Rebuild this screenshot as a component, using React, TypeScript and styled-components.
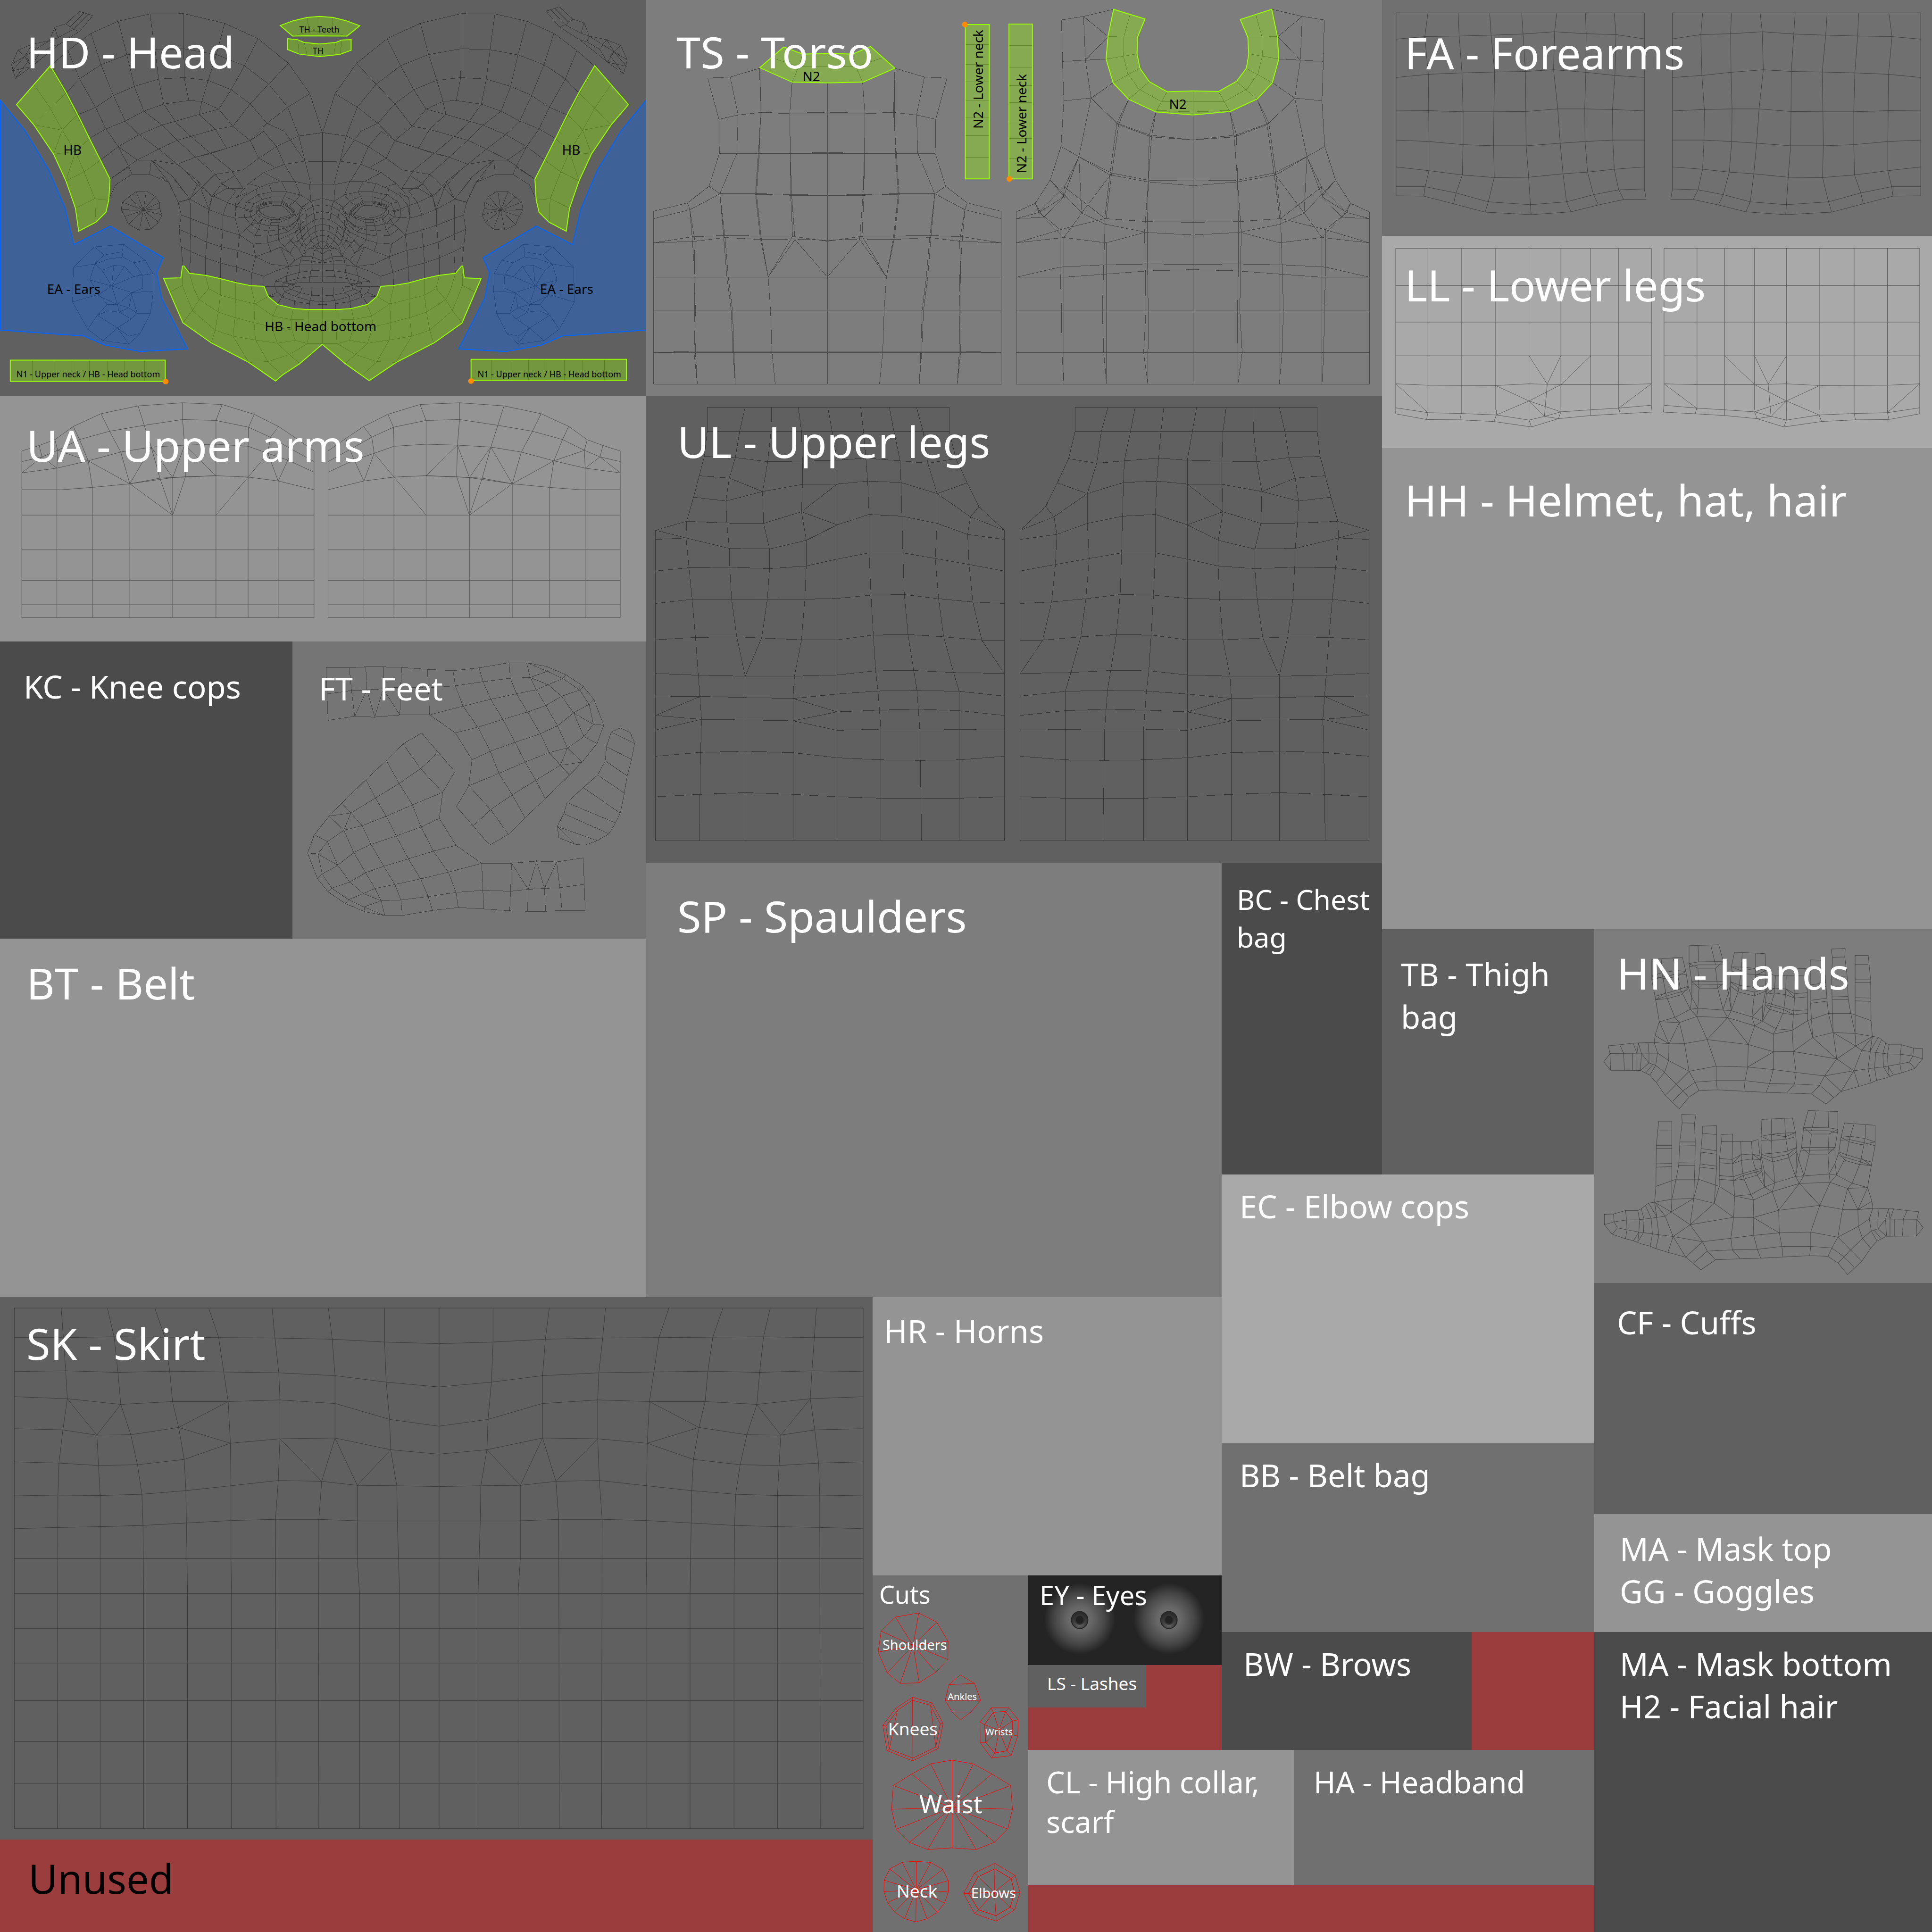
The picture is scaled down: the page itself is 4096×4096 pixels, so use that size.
import React from "react";
import styled, { createGlobalStyle } from "styled-components";

const GlobalStyle = createGlobalStyle`
  *, *::before, *::after { box-sizing: border-box; }
  body { margin: 0; background: #9c3d3d; font-family: "Noto Sans", "Open Sans", sans-serif; }
`;

/* ---------- layout ---------- */

const tracks = (...sizes: number[]) => sizes.map((s) => `minmax(0, ${s}fr)`).join(" ");

const Atlas = styled.main`
  display: grid;
  width: 100%;
  aspect-ratio: 1;
  grid-template-columns: ${tracks(1370, 480, 330, 410, 340, 450, 716)};
  grid-template-rows: ${tracks(1830, 140, 520, 260, 590, 370, 386)};
  grid-template-areas:
    "left torso torso torso torso right right"
    "left spaul spaul spaul chest right right"
    "left spaul spaul spaul chest thigh hands"
    "left spaul spaul spaul elbow elbow hands"
    "skirt skirt horns horns elbow elbow hands"
    "skirt skirt cuts eyes elbow elbow hands"
    "skirt skirt cuts foot foot foot hands";
`;

const Stack = styled.div<{ $area?: string; $rows: number[] }>`
  display: grid;
  min-width: 0;
  grid-area: ${(p) => p.$area ?? "auto"};
  grid-template-rows: ${(p) => tracks(...p.$rows)};
`;

const Row = styled.div<{ $cols: number[] }>`
  display: grid;
  min-height: 0;
  grid-template-columns: ${(p) => tracks(...p.$cols)};
`;

const tones = {
  coal: "#4b4b4b",
  dark: "#606060",
  slate: "#707070",
  stone: "#757575",
  mid: "#7d7d7d",
  light: "#949494",
  pale: "#a9a9a9",
  night: "#242424",
  unused: "#9c3d3d",
};

const Panel = styled.section<{ $tone: keyof typeof tones; $area?: string }>`
  position: relative;
  overflow: hidden;
  min-width: 0;
  min-height: 0;
  grid-area: ${(p) => p.$area ?? "auto"};
  background: ${(p) => tones[p.$tone]};
`;

const sizes = {
  xl: [92, 120],
  lg: [85, 108],
  md: [67, 90],
  sm: [63, 84],
  xs: [59, 80],
  eye: [56, 74],
  cut: [52, 68],
  tiny: [37, 50],
} as const;

const Title = styled.h2<{ $size?: keyof typeof sizes; $top: number; $left: number; $ink?: string }>`
  position: relative;
  margin: 0;
  padding: ${(p) => p.$top}px 0 0 ${(p) => p.$left}px;
  font-weight: 400;
  font-size: ${(p) => sizes[p.$size ?? "xl"][0]}px;
  line-height: ${(p) => sizes[p.$size ?? "xl"][1]}px;
  color: ${(p) => p.$ink ?? "#fff"};
  white-space: nowrap;
`;

/* ---------- drawings ---------- */

const Drawing = styled.svg`
  position: absolute;
  inset: 0;
  display: block;
  width: 100%;
  height: 100%;
  path, polygon, rect { vector-effect: non-scaling-stroke; }
`;

const Wire = styled.g<{ $ink: string }>`
  fill: none;
  stroke: ${(p) => p.$ink};
  stroke-width: 1;
  shape-rendering: crispEdges;
`;

const Zone = styled.g<{ $ink: string }>`
  fill: ${(p) => p.$ink};
  fill-opacity: 0.35;
  stroke: ${(p) => p.$ink};
  stroke-width: 2;
`;

const Note = styled.span<{ $x: number; $y: number; $size: number; $ink: string; $upright?: boolean }>`
  position: absolute;
  left: ${(p) => p.$x * 100}%;
  top: ${(p) => p.$y * 100}%;
  font-size: ${(p) => p.$size}px;
  line-height: 1;
  white-space: nowrap;
  color: ${(p) => p.$ink};
  writing-mode: ${(p) => (p.$upright ? "vertical-rl" : "horizontal-tb")};
  transform: translate(-50%, -50%) ${(p) => (p.$upright ? "rotate(180deg)" : "")};
`;

type Mark = [text: string, x: number, y: number, size: number, upright?: boolean];

function Notes({ box, marks, ink }: { box: number[]; marks: Mark[]; ink: string }) {
  return (
    <>
      {marks.map(([text, x, y, size, upright]) => (
        <Note
          key={text + x}
          $x={(x - box[0]) / box[2]}
          $y={(y - box[1]) / box[3]}
          $size={size}
          $ink={ink}
          $upright={upright}
        >
          {text}
        </Note>
      ))}
    </>
  );
}

/** A mesh island together with its mirror image; `sum` is twice the axis x. */
function Mirrored({ d, sum }: { d: string; sum: number }) {
  return (
    <>
      <path d={d} />
      <path d={d} transform={`translate(${sum} 0) scale(-1 1)`} />
    </>
  );
}

/** Closed rim with a spoke from every rim point to the centre. */
function fan(cx: number, cy: number, rim: string) {
  const pts = rim.split(" ");
  return `M${rim}Z` + pts.map((p) => `M${p} ${cx},${cy}`).join("");
}

/** Two nested rims joined point by point. */
function band(outer: string, inner: string) {
  const o = outer.split(" ");
  const i = inner.split(" ");
  return `M${outer}Z M${inner}Z` + o.map((p, n) => `M${p} ${i[n]}`).join("");
}

const lines = (xs: number[], y1: number, y2: number) => xs.map((x) => `M${x},${y1} ${x},${y2}`).join("");
const rungs = (ys: number[], x1: number, x2: number) => ys.map((y) => `M${x1},${y} ${x2},${y}`).join("");

/** Horizontal rows and vertical columns through a grid of mesh points. */
function mesh(columns: number[][][]) {
  const cols = columns.map((c) => "M" + c.map((p) => p.join(",")).join(" ")).join("");
  const rows = columns[0].map((_, r) => "M" + columns.map((c) => c[r].join(",")).join(" ")).join("");
  return cols + rows;
}

const skull =
  "M782,525 752,371 700,251 626,153 545,92 446,54 364,55 287,84 221,132 165,200 122,262" +
  "M782,525 725,538 698,424 652,333 593,260 525,216 446,193 376,197 308,217 245,256 193,312 159,370 122,428 82,494" +
  "M740,638 725,538M740,638 690,520 648,488 607,411 561,355 505,318 447,307 385,313 326,342 275,378 232,425 186,456 151,515 130,610" +
  "M648,488 607,556 565,500 531,432 490,401 458,398 397,412 349,440 304,479 257,510 217,548 183,600 160,716" +
  "M490,401 483,453 393,495 338,533 287,580 243,635 204,680 160,716" +
  "M483,453 523,512 430,555 385,590 333,633 267,709" +
  "M523,512 550,587 475,622 430,650 367,633 363,690" +
  "M446,54 446,193 447,307 458,398M364,55 376,197 385,313 397,412 430,490 470,550 512,608 560,672 590,745" +
  "M287,84 308,217 326,342 349,440 393,495 430,555 475,622 522,690 550,745" +
  "M221,132 245,256 275,378 304,479 338,533 385,590 430,650 480,716 515,780" +
  "M165,200 193,312 232,425 257,510 287,580 333,633 367,633" +
  "M287,580 313,660 320,690 363,690 410,722 432,800M313,660 267,709M320,690 280,732 264,790M410,722 367,633 420,700 461,788 432,800" +
  "M122,262 159,370 186,456 217,548 243,635 267,709" +
  "M545,92 525,216 505,318 490,401M626,153 593,260 561,355 531,432 483,453M700,251 652,333 607,411 565,500 523,512" +
  "M752,371 698,424 648,488M607,556 550,587 512,608 475,622M82,334 122,428 151,515 183,600 204,680 230,786 233,879" +
  "M82,494 151,515M130,610 183,600M183,824 230,786 264,793" +
  "M782,525 782,718M782,525 838,538M725,538 671,580 628,626 590,672 522,690 461,788" +
  "M671,580 640,520 607,556 628,626 665,660M690,650 671,580M782,640 740,638 690,650 640,683 603,727 573,783 570,862" +
  "M740,638 755,731M690,650 715,718M640,683 680,718M603,727 628,738M573,783 598,762M480,716 505,820M550,745 515,780 505,850M590,745 550,745";

const face =
  "M40,20 85,147 99,228 89,318 99,430 107,550M141,127 142,318 145,460 138,597M85,147 141,127 175,33 M141,127 65,0" +
  "M175,33 120,-50M175,33 248,105 227,190 227,293 220,400 214,500 214,610M141,127 227,190 297,228 355,247 397,244 430,238" +
  "M248,105 318,148 297,228 297,323 290,430 285,533 285,632M290,30 360,75 318,148 362,170 398,188 443,202M248,105 290,30 350,-20" +
  "M99,228 142,248 227,293 297,323 376,354 407,315 430,288 452,245M89,318 142,350 220,400 290,430 375,455 452,493 525,458 570,430" +
  "M99,430 145,460 214,500 285,533 365,560 430,590 492,617 545,585 611,555 640,515 675,490" +
  "M355,247 376,354 368,450 362,560 358,655M376,354 440,412 452,493 435,590 430,678M452,493 525,540 611,555M492,617 492,680" +
  "M355,247 362,170 400,105 455,62 515,28 575,14 640,14 708,33 769,33" +
  "M472,190 500,175 540,166 575,168 595,185 608,208 622,222 600,235 563,247 530,245 495,230 472,208Z" +
  "M465,182 497,162 533,152 573,152 605,175 625,205 632,222 612,240 565,258 530,258 488,242 462,212Z" +
  "M459,178 495,156 530,146 577,146 608,170 630,200 637,222 622,242 565,275 525,273 482,256 455,215Z" +
  "M452,174 495,150 528,139 578,139 612,166 636,198 641,225 640,250" +
  "M425,205 445,155 485,128 530,112 595,112 640,140 675,185 650,260 610,300 563,297 515,297 465,280 430,240Z" +
  "M397,195 410,145 460,100 530,80 600,80 665,100 715,140 M397,195 400,245 430,288 465,320 515,328 560,322 620,300 660,245" +
  "M407,315 450,358 510,362 560,350 605,335 640,300M440,412 510,405 560,385 600,362 640,335 695,290" +
  "M530,80 530,139M600,80 578,139 575,168M665,100 640,140 608,170M530,166 530,112M460,100 485,128 497,175M410,145 445,155 472,190M397,195 425,205 472,200M400,245 430,240 462,212M465,280 488,242M430,288 465,280M465,320 482,256M515,328 530,245M560,322 565,247M610,300 612,240M515,28 530,80M575,14 600,80M640,14 665,100M455,62 460,100" +
  "M450,358 465,320M510,405 510,362 515,328M560,385 560,322M605,335 580,300M510,405 525,458M560,385 590,430 615,470 640,515M600,362 630,405 660,450 675,490" +
  "M769,122 715,140 678,170 660,205 640,250M769,162 725,172 690,200 660,245 640,300M769,206 730,215 695,242 665,290 640,335" +
  "M769,250 733,258 695,290 665,335 630,375 590,430M769,287 735,295 700,328 670,372 640,415 615,470 570,430" +
  "M769,325 738,332 706,360 680,395 660,450M769,357 740,365 715,390 692,425 675,490 720,492 769,520" +
  "M769,395 755,400 730,425 700,445 675,490M769,420 752,420 740,435 700,445M769,445 745,438 730,455 M769,475 740,450 730,455 725,490 718,520 716,545" +
  "M708,33 715,140 725,172 730,215 733,258 735,295 740,365 752,400 752,420 769,445M678,170 690,200 695,242 695,290 700,328 715,390 740,435" +
  "M660,205 665,290 670,372 692,425M640,335 655,390 680,430M655,390 630,405M650,260 665,335 680,395" +
  "M660,450 675,490 665,515 662,545M665,515 718,520 769,533M611,555 570,430M0,-20 40,20" +
  "M769,545 716,543 662,545 611,555M769,578 715,582 660,592 600,615 545,648 543,682 555,720 590,750" +
  "M769,617 710,620 650,632 585,655 580,682 590,715 640,745 710,772 769,778M769,655 710,655 660,657 612,668 640,682 700,687 769,687" +
  "M769,742 718,738 665,722 620,700 605,682 612,668M769,797 708,792 645,780 580,750 512,745M492,681 605,682" +
  "M716,545 715,582 710,620 710,655M662,545 660,592 650,632 640,660M600,615 600,655M611,555 600,615M545,648 585,655 635,668M590,662 638,672M716,687 718,738 710,772 706,828M675,683 665,722 640,745 635,820M640,682 620,700 590,715 557,797M555,720 512,745" +
  "M105,600 105,675 45,717M105,675 123,740 152,835 107,913M138,600 160,700 184,765 275,845 355,880 445,912 530,940 625,958 769,960" +
  "M214,612 230,695 285,738 365,765 450,793 535,870 620,892 769,897M230,695 184,765 152,835 260,960 345,998 450,1022 555,1043 640,1025 700,1045 769,1045" +
  "M285,632 285,738 275,845 260,960 242,1040M358,655 355,880 345,998 420,1165M430,678 450,793 445,912 452,1022 510,1160 575,1240M512,745 450,793" +
  "M557,797 535,870 530,940 555,1043 612,1115 660,1170M632,822 620,892 625,958 640,1025M706,828 704,897 704,960 700,1045 612,1115 510,1160 420,1165";

const ear =
  "M300,967 352,1030 371,1083 372,1155 365,1240 340,1320 313,1362 250,1348 213,1303 176,1195 178,1058 229,977Z" +
  "M229,977 253,1009 296,997 300,967 M178,1058 230,1045 253,1009 M230,1045 264,1025 298,1017 325,1040 352,1030M230,1045 218,1108 271,1132 320,1158 372,1152" +
  "M296,997 298,1017M230,1045 248,1070 276,1050 302,1054 324,1095 345,1085 347,1140 320,1158M325,1040 345,1085M248,1070 271,1132 276,1050M302,1054 271,1132 240,1165 176,1195M324,1095 271,1132 285,1205 313,1218 320,1158 285,1205 238,1170" +
  "M240,1165 260,1205 236,1248 213,1303M260,1205 285,1205 289,1235 313,1218 333,1240 365,1240M333,1240 318,1262 289,1235 262,1230 236,1248 285,1298 250,1348M318,1262 285,1298 313,1330 340,1320M313,1330 313,1362M285,1298 313,1362M333,1240 320,1170M218,1108 240,1165M371,1083 324,1095";

const scrap =
  "M1325,44 1357,27 1390,76 1417,90 1430,143 1472,157 1506,180 1522,237 1513,292 1474,246 1407,158 1357,106 1325,44" +
  "M1336,39 1372,98 1390,76M1346,33 1380,88M1357,106 1372,98 1410,132 1430,143 1424,165 1407,158M1410,132 1417,90M1430,143 1490,205 1522,237M1472,157 1455,195 1424,165M1472,157 1490,205 1506,180M1455,195 1474,246 1490,205 1520,262 1474,246M1490,205 1480,220 1513,292";

const chin =
  "15,630 97,627 105,552 112,552 138,598 218,612 285,632 360,658 430,677 492,681 512,745 557,797 632,822 690,828 850,828 908,822 985,796 1028,746 1047,681 1108,676 1180,659 1252,632 1320,612 1402,598 1430,552 1436,552 1443,627 1523,632 1432,915 1300,1041 1120,1165 992,1281 880,1175 769,1050 660,1175 580,1245 547,1283 420,1165 242,1041 107,913";

const temple =
  "M122,260 40,414 82,494 130,610 160,716 183,824 191,915 233,879 257,840 264,791 267,709 217,548 190,458 159,362Z";

const cheek =
  "M0,396 62,520 118,672 158,824 179,968 267,895 396,1020 380,1079 392,1180 455,1381 340,1391 255,1366 204,1330 0,1306Z";

const teeth =
  "M745,69 750,125 710,143M776,65 776,125M808,69 804,125 842,143M750,125 804,125M722,157 726,214M738,168 745,218M776,174 776,224M815,168 810,219M830,158 825,215";

function HeadDrawing() {
  return (
    <Drawing viewBox="0 0 1370 840" preserveAspectRatio="none" aria-hidden="true">
      <g transform="scale(.87372 .535714)">
        <Wire $ink="#393939">
          <Mirrored d={skull} sum={1565} />
          <Mirrored d={ear} sum={1570} />
          <Mirrored
            d={fan(348, 832, "330,758 355,756 377,777 387,802 388,826 393,850 385,880 366,907 338,911 312,888 303,857 294,830 297,800 312,780")}
            sum={1563}
          />
          <path d={scrap} />
          <path d={scrap} transform="translate(1550 18) scale(-1 1)" />
          <path d={teeth + lines([78, 131, 175, 217, 261, 303, 351, 1192, 1242, 1283, 1327, 1370, 1414, 1467], 1425, 1508)} />
        </Wire>
      </g>
      <g transform="translate(340 380) scale(.446429 .333333)">
        <Wire $ink="#393939">
          <Mirrored d={face} sum={1539} />
          <path d="M769,0 769,655M769,687 769,1050" />
        </Wire>
        <Zone $ink="#99ff00">
          <polygon points={chin} />
        </Zone>
      </g>
      <g transform="scale(.87372 .535714)">
        <Zone $ink="#0066ff">
          <Mirrored d={cheek} sum={1568} />
        </Zone>
        <Zone $ink="#99ff00">
          <Mirrored d={temple} sum={1565} />
          <path d="M680,101 710,83 745,69 776,65 808,69 840,82 873,102 842,143 740,142 710,143Z" />
          <path d="M698,153 722,157 738,168 776,174 815,168 830,158 852,157 852,199 825,215 776,224 726,214 698,196Z" />
          <rect x="25" y="1425" width="376" height="84" />
          <rect x="1143" y="1422" width="377" height="83" />
        </Zone>
        <ellipse cx="402" cy="1510" rx="7" ry="11" fill="#ff8c00" />
        <ellipse cx="1143" cy="1508" rx="7" ry="11" fill="#ff8c00" />
      </g>
    </Drawing>
  );
}

const headMarks: Mark[] = [
  ["TH - Teeth", 775, 115, 18],
  ["TH", 772, 199, 18],
  ["HB", 176, 592, 28],
  ["HB", 1386, 592, 28],
  ["EA - Ears", 179, 1143, 28],
  ["EA - Ears", 1375, 1143, 28],
  ["HB - Head bottom", 778, 1290, 28],
  ["N1 - Upper neck / HB - Head bottom", 214, 1481, 18],
  ["N1 - Upper neck / HB - Head bottom", 1333, 1481, 18],
];

const torsoBack =
  "M242,270 179,305 131,309 155,472 156,607 134,737 88,803 16,836 16,1521M179,305 196,455 193,607 157,767 93,830 16,865M134,737 157,767M88,803 93,830" +
  "M242,270 245,445 239,607 233,768 243,940 260,1096 265,1230 268,1395 275,1521M242,270 243,445 241,607 235,768 245,940 260,1096" +
  "M311,325 306,448 307,607 310,772 317,948 386,1096M307,607 308,772 312,935 260,1096 317,948M386,328 386,1521" +
  "M157,767 168,940 175,1097 184,1228 187,1395 190,1521M157,767 165,935 172,1097 181,1228 185,1395 190,1521" +
  "M93,830 104,955 102,1097 105,1228 102,1395 109,1521M93,830 98,940 104,1097 103,1228 105,1395 109,1521" +
  "M155,472 196,455 245,445 306,450 386,451M245,445 306,448 386,444M156,607 386,607M239,605 350,605 386,603M157,767 233,769 308,773 386,773M157,767 233,766 308,770 386,772" +
  "M16,961 98,937 168,932 243,934 312,935 386,955M16,961 104,955 168,940 243,948 317,946 386,951M16,1395 102,1390 386,1390" +
  "M268,229 325,264 386,263M334,214 325,264 311,325" +
  rungs([1097, 1228, 1395, 1520], 16, 386);

const torsoFront =
  "M996,37 932,65 885,79 887,243 890,399 884,580 861,712 829,805 789,838 789,1521M932,65 936,238 948,388 922,620 891,740 837,841 789,865M932,65 984,145 936,238" +
  "M887,243 936,238 980,234M890,399 948,388 995,328M948,388 1005,492 1077,542 1165,554M948,388 1003,487 1072,534 1165,554" +
  "M1028,393 1003,487 988,692 977,865M1028,393 1007,492 992,685 980,865M1086,443 1072,534 1070,715 1068,877 1068,1045 1070,1228 1069,1521M1086,443 1077,542 1070,715 1062,918 1065,1228 1060,1395 1069,1521" +
  "M884,580 922,620 992,685 1070,713 1165,716M922,620 988,692 1070,720 1165,735M978,865 1068,877 1165,880M978,865 884,908 789,961" +
  "M980,888 1068,920 1165,930M922,620 889,780M861,712 928,843 980,888M891,740 978,865M861,712 891,780 847,860 789,865M891,740 889,780 837,841M829,805 847,860 890,940M829,805 837,841 882,908" +
  "M789,961 890,940 980,961 1062,920M992,685 928,843 890,940M922,620 928,843M882,908 882,1057 885,1228 886,1395 890,1521M890,940 890,1521" +
  "M978,865 975,1047 972,1228 975,1395 981,1521M980,961 980,1521M789,1097 882,1057 977,1048 1068,1045 1165,1046M789,1097 890,1097 979,1085 1070,1072 1165,1067M1165,362 1165,1521" +
  "M1031,57 1018,145 1017,222 1026,290 1050,353 1098,402 1165,402M984,145 1047,147M980,234 1046,213M995,328 1052,270M1028,393 1072,323M1086,443 1110,363M1086,437 1165,443" +
  rungs([1228, 1395, 1520], 789, 1165);

function TorsoDrawing() {
  return (
    <Drawing viewBox="0 0 1568 1568" preserveAspectRatio="none" aria-hidden="true">
      <Wire $ink="#464646">
        <Mirrored d={torsoBack} sum={772} />
        <Mirrored d={torsoFront} sum={2330} />
        <path d={rungs([176, 255, 324, 397, 464, 537, 622], 680, 731) + rungs([180, 266, 339, 406, 479, 548, 628], 773, 823)} />
      </Wire>
      <Zone $ink="#99ff00">
        <path d="M293,186 334,214 386,211 440,214 478,184 530,270 462,325 386,328 311,325 242,268Z" />
        <path d="M996,37 1063,75 1047,147 1046,213 1052,270 1072,323 1110,363 1165,360 1220,362 1258,322 1279,270 1284,213 1282,147 1266,77 1333,37 1345,145 1348,234 1334,328 1302,392 1245,441 1165,455 1086,443 1028,393 995,328 980,234 984,145Z" />
        <rect x="680" y="97" width="51" height="611" />
        <rect x="773" y="95" width="50" height="613" />
      </Zone>
      <ellipse cx="679" cy="97" rx="6" ry="11" fill="#ff8c00" />
      <ellipse cx="774" cy="708" rx="6" ry="11" fill="#ff8c00" />
    </Drawing>
  );
}

const torsoMarks: Mark[] = [
  ["N2", 352, 300, 28],
  ["N2", 1133, 410, 28],
  ["N2 - Lower neck", 707, 314, 28, true],
  ["N2 - Lower neck", 799, 489, 28, true],
];

const forearm = mesh([
  [[40, 45], [40, 137], [40, 271], [40, 388], [40, 490], [40, 584], [40, 653], [40, 685]],
  [[131, 45], [122, 128], [132, 260], [133, 387], [134, 495], [134, 597], [123, 653], [119, 686]],
  [[217, 45], [220, 126], [228, 255], [231, 391], [231, 506], [229, 612], [211, 675], [204, 713]],
  [[307, 45], [311, 123], [321, 252], [319, 391], [318, 510], [320, 621], [303, 706], [294, 742]],
  [[398, 45], [402, 119], [409, 250], [410, 390], [411, 510], [418, 620], [423, 716], [425, 751]],
  [[498, 45], [492, 111], [489, 244], [501, 381], [508, 501], [516, 608], [526, 706], [539, 741]],
  [[580, 45], [582, 118], [581, 253], [578, 381], [579, 495], [586, 602], [603, 681], [617, 717]],
  [[662, 45], [667, 121], [664, 264], [657, 383], [658, 490], [662, 592], [675, 664], [689, 698]],
  [[748, 45], [748, 136], [748, 271], [748, 388], [748, 490], [748, 584], [748, 661], [753, 697]],
]);

const lowerLeg =
  lines([39, 768], 869, 1418) +
  lines([131, 226, 324, 419, 510, 595, 674], 869, 1434) +
  rungs([869, 999, 1127, 1245], 39, 768) +
  "M39,1343 131,1348 324,1349 419,1343 510,1346 674,1346 768,1343M39,1427 131,1444 226,1447 326,1452 419,1470 463,1457 510,1441 595,1434 675,1428 768,1418" +
  "M39,1418 39,1448 127,1468 222,1469 319,1475 426,1494 503,1465 595,1454 679,1448 770,1442 768,1418M131,1434 131,1444 127,1468M226,1434 226,1447 222,1469M326,1434 326,1452 319,1475M419,1434 419,1470 426,1494M510,1441 503,1465 463,1457M595,1434 595,1454M675,1428 679,1448" +
  "M419,1245 471,1344 510,1245M595,1245 510,1346 419,1403 324,1349M471,1344 463,1457 419,1403 326,1452M419,1403 510,1441M39,1343 131,1444M768,1343 675,1428";

const upperArm =
  "M53,350 95,315 133,278 178,193 245,112 335,62 443,42 539,53 617,116 676,194 719,270 762,350" +
  "M53,418 102,388 140,346 193,277 266,224 350,186 443,149 524,155 603,198 656,262 705,335 762,418" +
  "M53,490 138,460 214,413 293,357 367,325 448,313 524,307 602,320 650,365 700,410 762,486" +
  "M53,598 150,598 224,583 315,560 420,520 524,508 602,517 675,542 762,598M315,560 388,524 450,515 524,508" +
  "M95,315 102,388 53,490M102,388 138,460M133,278 140,346 138,460 138,1415M178,193 193,277 214,413 224,583 224,1415M245,112 266,224 293,357 315,560 315,1415M140,346 214,413 315,560 419,760" +
  "M335,62 350,186 367,325 315,560M367,325 419,520 419,1415M367,325 388,524 419,760M443,42 443,149 448,313 419,520M448,313 450,515 419,760M448,313 524,508" +
  "M539,53 524,155 524,1415M617,116 603,198 602,320 602,1415M676,194 656,262 650,365 675,542 675,1415M650,365 602,517 524,760M719,270 700,400 675,542M53,350 53,1415M762,350 762,1415" +
  rungs([760, 982, 1177, 1333, 1415], 53, 762);

const upperLeg =
  "M130,37 646,37M130,118 646,118M130,37 130,118 124,202 113,267 101,339 86,420 20,450 20,1493 763,1493 763,450 709,371 684,291 660,210 646,118 646,37" +
  "M124,202 190,206 259,220 333,218 407,215 468,208 541,217 600,225 660,210M113,267 177,275 248,320 333,296 407,295 472,285 543,290 620,327 684,291M101,339 170,352 248,320" +
  "M620,327 691,405 763,450M709,371 691,405 685,464 688,565M86,420 172,426 250,427 331,388 407,295M331,388 407,432 475,397 545,403 620,427 685,464 763,481" +
  "M20,481 85,476 177,511 263,513 341,484 407,432M20,450 85,476M20,587 91,576 178,574 263,579 341,570 407,547 475,526 547,526 616,545 688,565 763,587" +
  "M20,696 98,682 182,682 258,683 338,682 407,679 479,668 550,666 623,680 696,691 763,696M20,818 105,810 193,808 246,812 331,818 407,818 484,802 558,800 634,808 715,819 763,819" +
  "M20,931 111,937 211,940 316,940 407,936 489,922 570,921 655,928 763,931M20,1007 115,1008 211,1012 313,1015 407,1000 494,990 577,988 667,991 763,1007" +
  "M115,1008 20,1072 118,1085 20,1121M118,1085 211,1087 313,1090 407,1060 313,1015M407,1060 498,1054 580,1051 667,1056 763,1072M313,1090 407,1122 500,1118 583,1117 667,1119 763,1121" +
  "M20,1209 116,1196 211,1192 313,1197 407,1214 500,1221 584,1223 667,1221 763,1209M20,1345 115,1337 211,1331 313,1337 407,1345 500,1350 667,1350 763,1345" +
  "M211,37 199,118 190,206 177,275 170,352 172,426 177,511 178,574 182,682 193,808 211,940 211,1493M86,420 85,476 91,576 98,682 105,810 111,937 118,1085 116,1196 113,1493" +
  "M267,37 266,118 259,220 248,320 250,427 263,513 263,579 258,683 246,812 211,940M324,37 331,118 333,218 333,296 331,388 341,484 341,570 338,682 331,818 316,940 313,1015 313,1493" +
  "M387,37 396,118 407,215 407,1493M457,37 463,118 468,208 472,285 475,397 475,526 479,668 484,802 489,922 494,990 500,1118 500,1493" +
  "M518,37 528,118 541,217 543,290 545,403 547,526 550,666 558,800 570,921 577,988 583,1117 584,1223 587,1493M576,37 590,118 600,225 620,327 620,427 616,545 623,680 634,808 655,928 667,991 667,1493M688,565 696,691 715,819 763,931";

const foot =
  "M149,139 252,139 325,134 405,134 484,137 598,147 712,154 827,139 960,112 1038,112 1126,132 1212,175 1290,238 1336,306 1380,442 1350,538 1284,637 1228,705 1121,829 1031,930 957,1018 874,1075 801,973 727,872 781,762 796,624 722,482 608,387 476,388 365,399 276,395 158,416Z" +
  "M152,277 262,259 330,255 402,250 480,240 603,245 722,234 845,212 966,194 1054,190 1133,228 1193,289 1246,377 1292,502 1219,562" +
  "M252,139 262,259 276,395 330,255 325,134M330,255 365,399 402,250 476,388M405,134 402,250M484,137 480,240 476,388M598,147 603,245 608,387" +
  "M712,154 722,234 756,341 822,452 877,579 915,696 974,809 1031,930M827,139 845,212 879,305 933,411 987,532 1031,636 1079,732 1121,829" +
  "M960,112 966,194 993,276 1042,372 1099,487 1138,586 1188,653 1228,705M1038,112 1054,190 1081,255 1123,338 1175,445 1219,562 1284,637" +
  "M608,387 756,341 879,305 993,276 1081,255 1133,228 1198,196 1212,175M722,482 822,452 933,411 1042,372 1123,338 1193,289 1273,256 1290,238" +
  "M796,624 877,579 987,532 1099,487 1175,445 1246,377 1315,331 1336,306M781,762 915,696 1031,636 1138,586 1219,562 1188,653 1284,637" +
  "M801,973 879,887 974,809 1079,732 1188,653M781,762 879,887 957,1018M1038,112 1130,157 1198,196 1273,256 1315,331 1334,437 1292,502 1350,538M1126,132 1130,157 1054,190M1246,377 1334,437 1380,442";

const sole =
  "M1454,456 1498,481 1517,538 1503,622 1484,709 1471,801 1453,906 1432,957 1403,1015 1351,1051 1296,1075 1252,1070 1181,1035 1174,976 1203,908 1217,850 1289,771 1353,704 1386,630 1392,555 1413,478Z" +
  "M1413,478 1517,538M1392,555 1503,622M1386,630 1484,709M1353,704 1471,801M1289,771 1453,906M1217,850 1432,957M1203,908 1403,1015M1174,976 1351,1051M1174,976 1252,1070";

const hand =
  "M280,1210 252,1214 218,1239 202,1247 145,1247 89,1262 47,1264 47,1310 83,1352 145,1372 182,1381 216,1394 260,1405 286,1416 342,1432 425,1454 495,1510 563,1465 678,1461 773,1458 876,1453 1000,1447 1085,1450 1132,1480 1176,1531 1242,1472 1283,1414 1313,1382 1357,1361 1495,1360 1527,1323 1498,1286 1506,1252 1453,1247 1390,1240 1293,1237 1289,1206 1269,1145" +
  "M1495,1360 1498,1286 1277,1284 1226,1317 1224,1243 1293,1237 1277,1284 1286,1338 1245,1370 1190,1422 1132,1480M1226,1317 1245,1370 1283,1414M1313,1382 1286,1338 1317,1328 1357,1361M1317,1328 1352,1286 1366,1240 1373,1286 1390,1240M1322,1237 1317,1284 1317,1328M1300,1335 1330,1370M1352,1286 1357,1361M1373,1286 1373,1360M1393,1286 1393,1360M1453,1247 1435,1284 1431,1360" +
  "M1224,1243 1152,1242 1047,1224 856,1246 738,1278 647,1277 445,1310M1226,1317 1131,1365 1190,1422 1242,1472M1103,1413 1160,1452 1206,1498M1152,1242 1131,1365 1103,1413 1085,1450M1131,1365 1005,1342 859,1346 740,1357 634,1370 502,1385 366,1362 445,1310 502,1385 525,1427 563,1465" +
  "M1103,1413 1005,1406 871,1406 757,1419 641,1421 525,1427 459,1481M366,1362 425,1454 502,1385M1047,1224 1005,1342 1005,1406 1000,1447M856,1246 859,1346 871,1406 876,1453M738,1278 740,1357 757,1419 773,1458M738,1278 859,1346M647,1277 634,1370 641,1421 678,1461" +
  "M280,1210 360,1197 462,1193 557,1215 647,1277M462,1193 445,1310 357,1253 280,1210 329,1272 366,1362M462,1193 357,1253 329,1272M445,1310 557,1215M357,1253 360,1197" +
  "M47,1310 92,1297 150,1289 207,1288 264,1281 329,1272M89,1262 92,1297 108,1324 83,1352M108,1324 150,1332 207,1342 300,1354 366,1362M145,1247 150,1289 152,1332 145,1372M202,1247 210,1288 207,1342 182,1381M218,1239 231,1286 228,1346 202,1385 207,1342M238,1226 264,1281 270,1350 260,1405M252,1214 290,1275 280,1210 300,1354 286,1416M366,1362 342,1432" +
  "M280,1210 286,1140 288,959 299,851 360,851 360,1197M299,890 359,890M289,959 360,959M289,971 362,971M288,1040 360,1038M286,1055 360,1052M286,1140 380,1108 484,1108 580,1140" +
  "M360,1197 380,1108 392,1045 397,943 408,858 406,821 472,823 465,860 469,943 467,1045 462,1193M408,858 465,860M396,943 469,943M394,961 469,959M392,1033 468,1031M391,1047 468,1046" +
  "M462,1193 484,1108 490,1055 496,972 502,905 502,873 568,871 568,1055 557,1215 580,1140M502,905 566,910M496,972 568,982M493,988 568,997M490,1040 566,1050M488,1054 565,1063" +
  "M580,1140 581,1018 590,942 588,910 642,908 640,1020 645,1100 652,1183M588,942 730,941 760,932 772,1020 778,1070 790,1143M581,1016 640,1021 680,1000 733,996 770,1005M581,1035 640,1040 683,1025 733,1018 772,1023M640,1040 680,1000M733,996 772,1023M680,941 683,1027 690,1085 697,1112 727,1176M730,941 735,1020 757,1090 790,1143M581,1092 645,1097 690,1083 775,1060M581,1108 645,1114 693,1108 757,1090 780,1070M645,1114 690,1092 775,1070" +
  "M580,1140 652,1183 727,1176 790,1143 839,1124 935,1096 1090,1085 1125,1090 1197,1126 1269,1145M652,1183 740,1200 826,1163 952,1127 1095,1122 1176,1149 1269,1145M652,1183 647,1277M727,1176 740,1200 738,1278M790,1143 826,1163 856,1246M839,1124 826,1163M856,1246 952,1127 1047,1224 1095,1122 1125,1090M935,1096 952,1127 973,1092M1197,1126 1176,1149 1224,1243 1269,1145M1176,1149 1152,1242M1224,1243 1289,1206M1095,1122 1090,1085 1118,1038 1125,1090" +
  "M790,1143 790,1075 776,1010 774,940 778,843 920,837 935,905 940,985 935,1096M822,840 822,909 825,1012 829,1031 839,1124M884,838 888,920 903,1013 935,1096M775,918 822,909 888,903 933,902 888,920 822,909M775,938 888,932 935,920M775,918 822,940M775,997 825,993 892,985 940,967M776,997 825,1014 900,998 940,967M776,1010 829,1031 903,1013 940,985M790,1075 839,1124" +
  "M973,1092 948,1018 962,970 972,878 993,804 1131,808 1131,887 1118,970 1118,1038M1030,807 1008,893M1008,908 998,995 973,1092M1089,808 1087,880M1090,908 1085,996 1090,1085M972,878 1087,880 1131,887M972,893 1087,893 1131,903M972,878 1008,908 1090,908 1131,887M962,967 1118,967M962,980 1118,978M962,967 998,997 1085,996 1118,967M940,985 948,1018 935,1096" +
  "M1118,1038 1135,990 1145,925 1162,859 1304,869 1304,960 1286,1048 1269,1145M1206,863 1188,918 1170,1005 1125,1090M1260,865 1258,925 1235,1035 1197,1126M1145,922 1188,918 1258,928 1305,943M1143,935 1188,933 1255,947 1305,960M1145,922 1185,943 1240,955 1305,943M1135,988 1205,1010 1290,1033M1135,990 1165,1025 1228,1042 1287,1048 1240,1015M1135,1003 1225,1028 1287,1048";

const skirt =
  "M26,100 118,100 205,98 393,100 492,101 597,104 691,111 789,115M26,184 118,182 212,186 305,183 402,185 501,187 602,194 694,210 789,222" +
  "M26,246 121,251 217,265 310,258 410,258 503,254 603,263 700,302 789,319M26,325 113,328 174,341 235,340 321,322 410,258M321,322 414,361 503,350 602,348 702,377 789,388" +
  "M26,407 106,410 177,416 247,414 331,401 414,361M26,489 104,491 180,490 255,487 334,478 415,466 500,453 578,455 642,465 713,466 789,468" +
  "M26,572 104,569 180,567 257,564 335,558 415,552 495,549 572,549 649,553 789,553M121,251 174,341 217,265M503,350 578,455 602,348 642,465 702,377" +
  "M26,27 26,1313M110,27 118,182 121,251 113,328 106,410 104,491 103,1313M193,27 205,98 212,186 217,265 235,340 247,414 255,487 257,564 258,732 258,1313" +
  "M278,27 296,98 305,183 310,258 321,322 331,401 334,478 335,558 336,646 337,732 337,1313M375,27 393,100 402,185 410,258 414,361 415,466 415,646 416,732 416,1313" +
  "M489,27 494,101 501,187 503,254 503,350 500,453 495,549 496,1313M590,27 597,104 602,194 602,348M578,455 573,549 572,1313M691,27 691,111 694,210 700,302 702,377 713,466 714,553 718,732 718,1313" +
  "M642,465 642,646 646,732 646,1313M174,341 177,416 180,490 180,1313" +
  rungs([27, 646, 732, 819, 904, 997, 1098, 1201, 1313], 26, 789);

const cutShapes = [
  fan(182, 324, "207,183 288,223 339,306 338,385 284,440 209,486 124,489 66,443 25,353 38,262 102,201"),
  "M393,452 458,489 485,562 442,613 394,647 357,613 326,562 343,494ZM343,494 458,489M326,562 485,562M357,613 442,613",
  band("179,549 268,574 317,663 294,772 180,825 65,781 46,671 104,597", "179,562 260,584 304,664 284,765 181,813 75,774 60,674 111,606") +
    "M179,549 181,825M111,606 75,774M260,584 284,765",
  band("533,595 612,595 654,647 652,717 622,802 534,813 483,745 482,657", "542,614 597,611 628,652 627,712 604,781 549,791 508,745 503,668"),
  fan(568, 692, "542,614 597,611 628,652 627,712 604,781 549,791 508,745 503,668"),
  fan(357, 1028, "357,822 452,838 536,882 620,932 628,1035 607,1121 548,1178 465,1210 357,1203 248,1210 165,1179 106,1122 85,1035 93,932 176,882 261,838"),
  fan(196, 1385, "196,1261 261,1266 315,1296 340,1345 340,1394 323,1442 291,1482 245,1511 194,1524 144,1510 98,1481 67,1440 51,1393 52,1343 77,1294 133,1265"),
  band("549,1270 640,1322 662,1396 638,1472 555,1521 458,1488 409,1401 457,1312", "549,1294 622,1336 637,1396 618,1461 554,1497 476,1472 431,1401 474,1328"),
  fan(547, 1395, "549,1294 622,1336 637,1396 618,1461 554,1497 476,1472 431,1401 474,1328"),
];

const cutMarks: Mark[] = [
  ["Shoulders", 189, 318, 29],
  ["Ankles", 403, 546, 20],
  ["Knees", 181, 684, 37],
  ["Wrists", 568, 699, 20],
  ["Waist", 351, 1011, 52],
  ["Neck", 199, 1388, 37],
  ["Elbows", 543, 1396, 29],
];

function EyesDrawing() {
  return (
    <Drawing viewBox="699 20 869 388" preserveAspectRatio="none" aria-hidden="true">
      <defs>
        <radialGradient id="sclera">
          <stop offset="0" stopColor="#747474" />
          <stop offset=".35" stopColor="#666" />
          <stop offset=".7" stopColor="#474747" />
          <stop offset=".92" stopColor="#2d2d2d" />
          <stop offset="1" stopColor="#242424" />
        </radialGradient>
        <radialGradient id="iris" cx=".5" cy=".75" r=".6">
          <stop offset="0" stopColor="#6a6a6a" />
          <stop offset=".5" stopColor="#454545" />
          <stop offset="1" stopColor="#2c2c2c" />
        </radialGradient>
      </defs>
      {[930, 1331].map((x) => (
        <g key={x}>
          <ellipse cx={x} cy="208" rx="160" ry="154" fill="url(#sclera)" />
          <circle cx={x} cy="213" r="37" fill="url(#iris)" stroke="#262626" strokeWidth="4" />
          <circle cx={x} cy="211" r="23" fill="#343434" />
          <circle cx={x} cy="212" r="17" fill="#222" />
        </g>
      ))}
    </Drawing>
  );
}

/* ---------- page ---------- */

function Sheet({ box, ink, children }: { box: string; ink: string; children: React.ReactNode }) {
  return (
    <Drawing viewBox={box} preserveAspectRatio="none" aria-hidden="true">
      <Wire $ink={ink}>{children}</Wire>
    </Drawing>
  );
}

export default function App() {
  return (
    <>
      <GlobalStyle />
      <Atlas>
        <Stack $area="left" $rows={[840, 520, 630, 760]}>
          <Panel $tone="dark">
            <HeadDrawing />
            <Notes box={[0, 0, 1568, 1568]} marks={headMarks} ink="#000" />
            <Title $top={50} $left={56}>HD - Head</Title>
          </Panel>
          <Panel $tone="light">
            <Sheet box="0 0 1568 1568" ink="#4f4f4f">
              <Mirrored d={upperArm} sum={1558} />
            </Sheet>
            <Title $top={44} $left={56}>UA - Upper arms</Title>
          </Panel>
          <Row $cols={[620, 750]}>
            <Panel $tone="coal">
              <Title $size="md" $top={50} $left={50}>KC - Knee cops</Title>
            </Panel>
            <Panel $tone="stone">
              <Sheet box="0 0 1568 1568" ink="#444">
                <path d={foot} />
                <path d={foot} transform="rotate(180 723.5 779)" />
                <path d={sole} />
              </Sheet>
              <Title $size="md" $top={54} $left={56}>FT - Feet</Title>
            </Panel>
          </Row>
          <Panel $tone="light">
            <Title $top={34} $left={56}>BT - Belt</Title>
          </Panel>
        </Stack>

        <Stack $area="torso" $rows={[840, 990]}>
          <Panel $tone="mid">
            <TorsoDrawing />
            <Notes box={[0, 0, 1568, 1568]} marks={torsoMarks} ink="#000" />
            <Title $top={50} $left={64}>TS - Torso</Title>
          </Panel>
          <Panel $tone="dark">
            <Sheet box="0 0 1568 1568" ink="#363636">
              <Mirrored d={upperLeg} sum={1560} />
            </Sheet>
            <Title $top={36} $left={66}>UL - Upper legs</Title>
          </Panel>
        </Stack>

        <Stack $area="right" $rows={[500, 450, 1020]}>
          <Panel $tone="slate">
            <Sheet box="0 0 1568 825" ink="#404040">
              <Mirrored d={forearm} sum={1576} />
            </Sheet>
            <Title $top={52} $left={48}>FA - Forearms</Title>
          </Panel>
          <Panel $tone="pale">
            <Sheet box="0 825 1568 743" ink="#5a5a5a">
              <Mirrored d={lowerLeg} sum={1572} />
            </Sheet>
            <Title $top={44} $left={48}>LL - Lower legs</Title>
          </Panel>
          <Panel $tone="light">
            <Title $top={50} $left={48}>HH - Helmet, hat, hair</Title>
          </Panel>
        </Stack>

        <Panel $tone="mid" $area="spaul">
          <Title $top={52} $left={66}>SP - Spaulders</Title>
        </Panel>
        <Panel $tone="coal" $area="chest">
          <Title $size="xs" $top={36} $left={32}>BC - Chest<br />bag</Title>
        </Panel>
        <Panel $tone="dark" $area="thigh">
          <Title $size="md" $top={50} $left={40}>TB - Thigh<br />bag</Title>
        </Panel>

        <Stack $area="elbow" $rows={[570, 400, 250]}>
          <Panel $tone="pale">
            <Title $size="md" $top={22} $left={38}>EC - Elbow cops</Title>
          </Panel>
          <Panel $tone="slate">
            <Title $size="md" $top={22} $left={38}>BB - Belt bag</Title>
          </Panel>
          <Row $cols={[530, 260]}>
            <Panel $tone="coal">
              <Title $size="md" $top={22} $left={46}>BW - Brows</Title>
            </Panel>
            <Panel $tone="unused" />
          </Row>
        </Stack>

        <Stack $area="hands" $rows={[750, 490, 250, 636]}>
          <Panel $tone="mid">
            <Sheet box="0 0 1568 1568" ink="#464646">
              <path d={hand} />
              <path d={hand} transform="translate(1571 -735) scale(-1 1)" />
            </Sheet>
            <Title $top={33} $left={48}>HN - Hands</Title>
          </Panel>
          <Panel $tone="dark">
            <Title $size="md" $top={38} $left={48}>CF - Cuffs</Title>
          </Panel>
          <Panel $tone="light">
            <Title $size="md" $top={28} $left={54}>MA - Mask top<br />GG - Goggles</Title>
          </Panel>
          <Panel $tone="coal">
            <Title $size="md" $top={22} $left={54}>MA - Mask bottom<br />H2 - Facial hair</Title>
          </Panel>
        </Stack>

        <Stack $area="skirt" $rows={[1150, 196]}>
          <Panel $tone="dark">
            <Sheet box="0 0 1568 1340" ink="#3a3a3a">
              <Mirrored d={skirt} sum={1577} />
              <path d="M789,27 789,1313" />
            </Sheet>
            <Title $top={38} $left={56}>SK - Skirt</Title>
          </Panel>
          <Panel $tone="unused">
            <Title $size="lg" $top={28} $left={60} $ink="#000">Unused</Title>
          </Panel>
        </Stack>

        <Panel $tone="light" $area="horns">
          <Title $size="md" $top={26} $left={24}>HR - Horns</Title>
        </Panel>

        <Panel $tone="slate" $area="cuts">
          <Sheet box="0 20 699 1548" ink="#f00">
            {cutShapes.map((d) => (
              <path key={d} d={d} />
            ))}
          </Sheet>
          <Notes box={[0, 20, 699, 1548]} marks={cutMarks} ink="#fff" />
          <Title $size="cut" $top={6} $left={14}>Cuts</Title>
        </Panel>

        <Stack $area="eyes" $rows={[190, 90, 90]}>
          <Panel $tone="night">
            <EyesDrawing />
            <Title $size="eye" $top={4} $left={24}>EY - Eyes</Title>
          </Panel>
          <Row $cols={[250, 160]}>
            <Panel $tone="dark">
              <Title $size="tiny" $top={14} $left={40}>LS - Lashes</Title>
            </Panel>
            <Panel $tone="unused" />
          </Row>
          <Panel $tone="unused" />
        </Stack>

        <Stack $area="foot" $rows={[287, 99]}>
          <Row $cols={[563, 637]}>
            <Panel $tone="light">
              <Title $size="sm" $top={26} $left={38}>CL - High collar,<br />scarf</Title>
            </Panel>
            <Panel $tone="slate">
              <Title $size="sm" $top={26} $left={42}>HA - Headband</Title>
            </Panel>
          </Row>
          <Panel $tone="unused" />
        </Stack>
      </Atlas>
    </>
  );
}
